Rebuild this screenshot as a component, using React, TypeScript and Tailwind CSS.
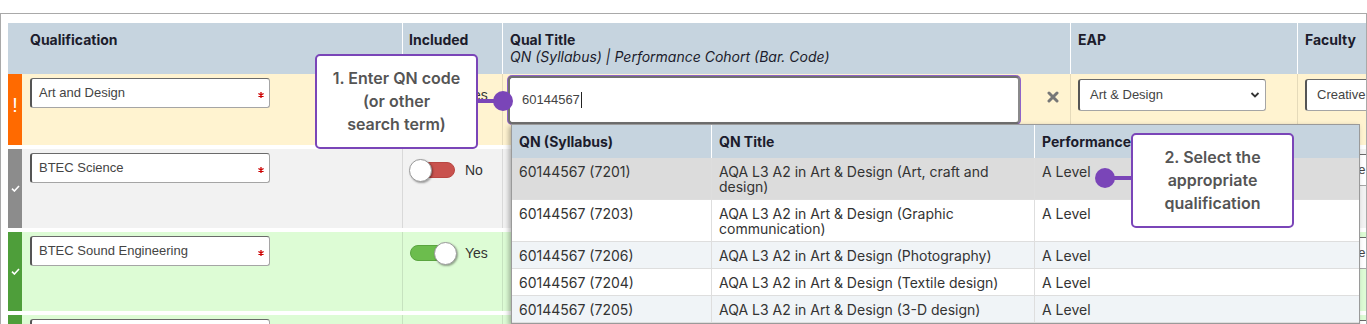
import React from 'react';

const inter = "font-['Inter',sans-serif]";
const arial = "font-['Liberation_Sans',Arial,sans-serif]";

type RowData = {
  name: string;
  strip: string;
  bg: string;
  status: 'warn' | 'ok';
  included: boolean;
  height: string;
};

const rows: RowData[] = [
  { name: 'Art and Design', strip: 'bg-[#ff6a00]', bg: 'bg-[#fff3d0]', status: 'warn', included: true, height: 'h-[71px]' },
  { name: 'BTEC Science', strip: 'bg-[#8c8c8c]', bg: 'bg-[#f2f2f2]', status: 'ok', included: false, height: 'h-[79px]' },
  { name: 'BTEC Sound Engineering', strip: 'bg-[#4e9e3a]', bg: 'bg-[#ddfcd5]', status: 'ok', included: true, height: 'h-[79px]' },
  { name: 'BTEC Music', strip: 'bg-[#4e9e3a]', bg: 'bg-[#ddfcd5]', status: 'ok', included: true, height: 'h-[79px]' },
];

const options = [
  { qn: '60144567 (7201)', title: 'AQA L3 A2 in Art & Design (Art, craft and design)', perf: 'A Level', bg: 'bg-[#dcdcdc]' },
  { qn: '60144567 (7203)', title: 'AQA L3 A2 in Art & Design (Graphic communication)', perf: 'A Level', bg: 'bg-white' },
  { qn: '60144567 (7206)', title: 'AQA L3 A2 in Art & Design (Photography)', perf: 'A Level', bg: 'bg-[#f0f4f7]' },
  { qn: '60144567 (7204)', title: 'AQA L3 A2 in Art & Design (Textile design)', perf: 'A Level', bg: 'bg-white' },
  { qn: '60144567 (7205)', title: 'AQA L3 A2 in Art & Design (3-D design)', perf: 'A Level', bg: 'bg-[#f0f4f7]' },
];

function Toggle({ on }: { on: boolean }) {
  return (
    <div className="flex items-center gap-[8px]">
      <div className="relative w-[48px] h-[23px]">
        {on ? (
          <div className="absolute left-[1px] top-[3px] w-[40px] h-[16px] rounded-full bg-[#6cbd4d] border border-[#5aa53f]" />
        ) : (
          <div className="absolute left-[7px] top-[3px] w-[39px] h-[16px] rounded-full bg-[#c9524e] border border-[#b94743]" />
        )}
        <div
          className={`absolute top-0 w-[23px] h-[23px] rounded-full bg-white border border-[#9a9a9a] shadow-[1px_1px_2px_rgba(0,0,0,0.35)] ${on ? 'left-[25px]' : 'left-0'}`}
        />
      </div>
      <span className={`${arial} text-[14px] text-[#333]`}>{on ? 'Yes' : 'No'}</span>
    </div>
  );
}

function TextBox({ value }: { value: string }) {
  return (
    <div className="w-[240px] h-[30px] bg-white rounded-[3px] border border-[#a5a5a5] border-l-2 border-l-[#555] border-t-[#6a6a6a] flex items-center pl-[7px] pr-[5px]">
      <span className={`${arial} text-[13px] text-[#444] flex-1`}>{value}</span>
      <svg width="6" height="6" viewBox="0 0 6 6" className="shrink-0 mt-[3px]">
        <path d="M3 0 V6 M0.4 1.5 L5.6 4.5 M5.6 1.5 L0.4 4.5" stroke="#cc0000" strokeWidth="1.3" />
      </svg>
    </div>
  );
}

function Select({ value, width }: { value: string; width: string }) {
  return (
    <div className={`${width} h-[32px] bg-white rounded-[3px] border border-[#a5a5a5] border-l-2 border-l-[#555] border-t-[#6a6a6a] flex items-center justify-between pl-[10px] pr-[5px]`}>
      <span className={`${arial} text-[13px] text-[#444] whitespace-nowrap`}>{value}</span>
      <svg width="10" height="8" viewBox="0 0 10 8" className="shrink-0">
        <path d="M1.5 2 L5 5.5 L8.5 2" fill="none" stroke="#333" strokeWidth="1.8" />
      </svg>
    </div>
  );
}

function Callout({ lines }: { lines: string[] }) {
  return (
    <div className={`w-[163px] h-[95px] bg-white border-2 border-[#7a45b8] rounded-[5px] flex flex-col items-center justify-center ${inter}`}>
      {lines.map((l) => (
        <div key={l} className="text-[16px] leading-[23px] font-semibold text-[#555]">{l}</div>
      ))}
    </div>
  );
}

export default function App() {
  return (
    <div className="relative w-[1367px] h-[324px] overflow-hidden bg-white">
      <div className="mt-[13px] w-[1367px] h-[311px] border-t border-l border-r border-[#a9a9a9] pl-[7px] pt-[9px] overflow-hidden">
        <div className="w-[1700px]">
          {/* header */}
          <div className={`flex h-[51px] bg-[#c6d4df] text-[14px] text-[#1c1c2c] ${inter}`}>
            <div className="w-[14px] shrink-0" />
            <div className="w-[381px] shrink-0 border-r border-white pl-[8px] pt-[8px] font-bold leading-[17px]">Qualification</div>
            <div className="w-[100px] shrink-0 border-r border-white pl-[6px] pt-[8px] font-bold leading-[17px]">Included</div>
            <div className="w-[568px] shrink-0 border-r border-white pl-[7px] pt-[8px] leading-[17px]">
              <div className="font-bold">Qual Title</div>
              <div className="italic">QN (Syllabus) | Performance Cohort (Bar. Code)</div>
            </div>
            <div className="w-[227px] shrink-0 border-r border-white pl-[7px] pt-[8px] font-bold leading-[17px]">EAP</div>
            <div className="w-[300px] shrink-0 pl-[7px] pt-[8px] font-bold leading-[17px]">Faculty</div>
          </div>

          {rows.map((r, i) => (
            <div key={r.name} className={`flex ${r.height} ${r.bg} ${i > 0 ? 'mt-[4px]' : ''}`}>
              <div className={`w-[14px] shrink-0 ${r.strip} flex items-center justify-center`}>
                {r.status === 'warn' ? (
                  <span className={`${arial} text-white text-[20px] leading-none mb-[10px]`}>!</span>
                ) : (
                  <svg width="9" height="7" viewBox="0 0 9 7">
                    <path d="M1 3.6 L3.4 6 L8 1" fill="none" stroke="#fff" strokeWidth="1.6" />
                  </svg>
                )}
              </div>
              <div className="w-[381px] shrink-0 border-r border-black/10 pl-[8px] pt-[4px]">
                <TextBox value={r.name} />
              </div>
              <div className="w-[100px] shrink-0 border-r border-black/10 pl-[6px] pt-[10px]">
                <Toggle on={r.included} />
              </div>
              <div className="w-[568px] shrink-0 border-r border-black/10 pl-[5px] pt-[2px]">
                {i === 0 && (
                  <div className="flex items-start">
                    <div className="w-[512px] h-[48px] bg-white rounded-[4px] border-2 border-[#707070] border-r-[#8a8a8a] ring-1 ring-[#8f63c9] flex items-center pl-[12px]">
                      <span className={`${arial} text-[13px] text-[#444]`}>60144567</span>
                      <span className="w-px h-[16px] bg-[#222] ml-[1px]" />
                    </div>
                    <svg width="12" height="12" viewBox="0 0 12 12" className="ml-[27px] mt-[15px]">
                      <path d="M2 2 L10 10 M10 2 L2 10" stroke="#777" strokeWidth="3" strokeLinecap="round" />
                    </svg>
                  </div>
                )}
              </div>
              <div className="w-[227px] shrink-0 border-r border-black/10 pl-[7px] pt-[5px]">
                <Select value="Art & Design" width="w-[188px]" />
              </div>
              <div className="w-[300px] shrink-0 pl-[7px] pt-[5px]">
                <Select value="Creative & Performing Arts" width="w-[220px]" />
              </div>
            </div>
          ))}
        </div>
      </div>

      {/* search results dropdown */}
      <div className={`absolute left-[511px] top-[124px] w-[849px] h-[200px] bg-white border border-[#9a9a9a] shadow-[-2px_2px_5px_rgba(0,0,0,0.3)] z-20 text-[14px] ${inter}`}>
        <div className="flex h-[33px] bg-[#c6d4df] font-bold text-[#1c1c2c] items-center">
          <div className="w-[200px] shrink-0 h-full border-r border-white pl-[7px] flex items-center">QN (Syllabus)</div>
          <div className="w-[323px] shrink-0 h-full border-r border-white pl-[7px] flex items-center">QN Title</div>
          <div className="flex-1 pl-[7px]">Performance Cohort</div>
        </div>
        {options.map((o) => (
          <div key={o.qn} className={`flex border-b border-[#dedede] ${o.bg} text-[#333] leading-[15px]`}>
            <div className="w-[200px] shrink-0 border-r border-[#dedede] pl-[7px] pt-[6px] pb-[5px]">{o.qn}</div>
            <div className="w-[323px] shrink-0 border-r border-[#dedede] pl-[7px] pr-[8px] pt-[6px] pb-[5px]">{o.title}</div>
            <div className="flex-1 pl-[7px] pt-[6px] pb-[5px]">{o.perf}</div>
          </div>
        ))}
      </div>

      {/* callout 1 */}
      <div className="absolute left-[315px] top-[54px] z-30">
        <Callout lines={['1. Enter QN code', '(or other', 'search term)']} />
      </div>
      <div className="absolute left-[477px] top-[99px] w-[26px] h-[4px] bg-[#7a45b8] z-30" />
      <div className="absolute left-[493px] top-[91px] w-[20px] h-[20px] rounded-full bg-[#7a45b8] z-30" />

      {/* callout 2 */}
      <div className="absolute left-[1131px] top-[133px] z-30">
        <Callout lines={['2. Select the', 'appropriate', 'qualification']} />
      </div>
      <div className="absolute left-[1105px] top-[176px] w-[27px] h-[4px] bg-[#7a45b8] z-30" />
      <div className="absolute left-[1095px] top-[168px] w-[20px] h-[20px] rounded-full bg-[#7a45b8] z-30" />
    </div>
  );
}
